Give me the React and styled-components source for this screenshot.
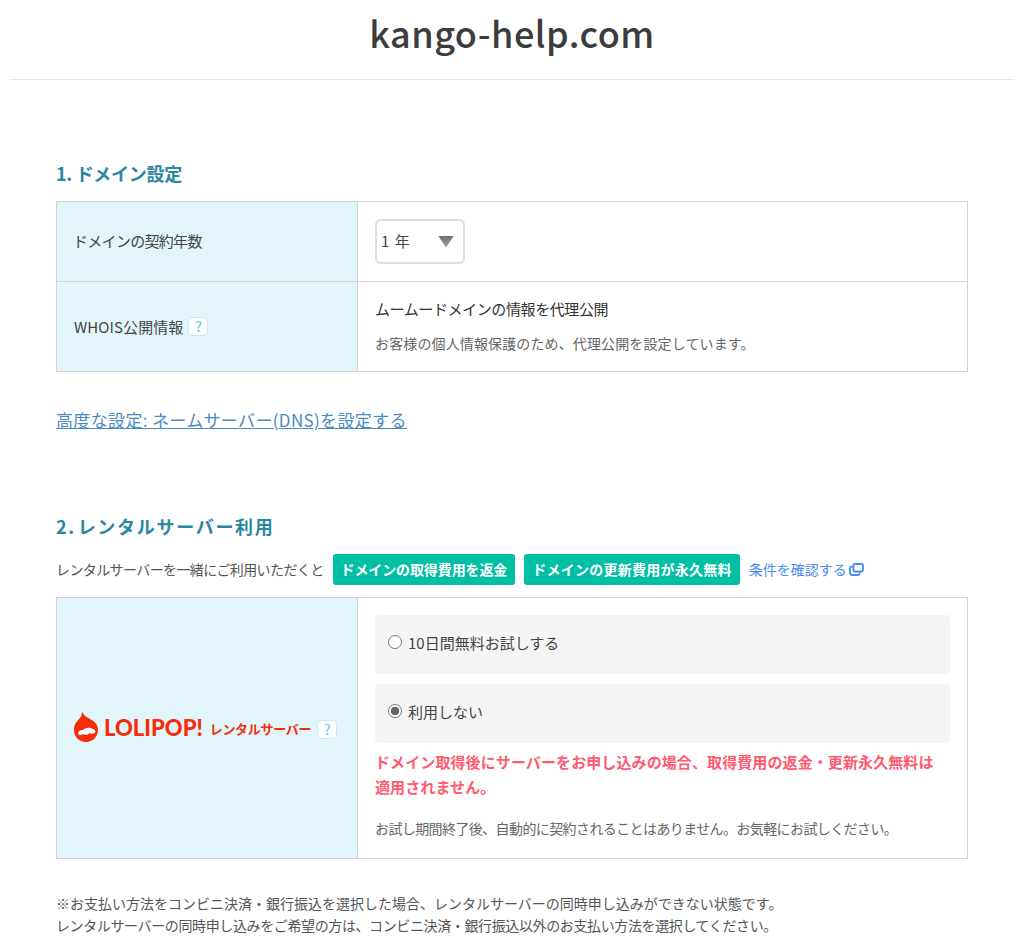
import React from 'react'
import styled, { createGlobalStyle } from 'styled-components'

const GlobalStyle = createGlobalStyle`
    html, body {
        margin: 0;
        padding: 0;
        background: #fff;
    }
    body {
        font-family: "Noto Sans CJK JP", "Liberation Sans", sans-serif;
        color: #444;
        font-size: 14px;
    }
`

function App() {
    return (
        <Page>
            <GlobalStyle />
            <Header>
                <Title>kango-help.com</Title>
            </Header>
            <Main>
                <Heading>1. ドメイン設定</Heading>
                <Table>
                    <Row>
                        <Label $tight>ドメインの契約年数</Label>
                        <Value $height={79}>
                            <Select>
                                <span>1 年</span>
                                <Arrow />
                            </Select>
                        </Value>
                    </Row>
                    <Row>
                        <Label $low>WHOIS公開情報<HelpBadge>?</HelpBadge></Label>
                        <Value $height={89}>
                            <Strong>ムームードメインの情報を代理公開</Strong>
                            <Note>お客様の個人情報保護のため、代理公開を設定しています。</Note>
                        </Value>
                    </Row>
                </Table>
                <DnsLink href="#">高度な設定: ネームサーバー(DNS)を設定する</DnsLink>

                <Heading $second>2. レンタルサーバー利用</Heading>
                <Lead>
                    <LeadText>レンタルサーバーを一緒にご利用いただくと</LeadText>
                    <Tag>ドメインの取得費用を返金</Tag>
                    <Tag $wide>ドメインの更新費用が永久無料</Tag>
                    <TermsLink href="#">
                        条件を確認する
                        <svg width="15" height="13" viewBox="0 0 15 13" fill="none" stroke="#4a8cf0" strokeWidth="1.8">
                            <rect x="4.500" y="1" width="9.500" height="7.500" rx="1.500" />
                            <path d="M4.500 3.600H2.500A1.500 1.500 0 0 0 1 5.100V10.500A1.500 1.500 0 0 0 2.500 12H9A1.500 1.500 0 0 0 10.500 10.500V8.500" />
                        </svg>
                    </TermsLink>
                </Lead>
                <Table>
                    <Row>
                        <LogoCell>
                            <svg width="24" height="30" viewBox="0 0 24 30">
                                <path fill="#f52c08" d="M8 0C10 3 12 5 16 7C21 9.500 24 13 24 18C24 25 18.500 30 12 30C5.500 30 0 25 0 18C0 12 3 9.500 5 7C7 5 8 3 8 0Z" />
                                <path fill="#fff" d="M4 21C4.500 18.500 7 17.500 9 18C11 15.500 16 15 19 17C21 17.500 22 19 21 20.500C19.500 22 17 22 15.500 21C14 23 11 23.500 9 22C7.500 23.500 4 23.500 4 21Z" />
                            </svg>
                            <LogoWord>LOLIPOP!</LogoWord>
                            <LogoSub>レンタルサーバー</LogoSub>
                            <HelpBadge $logo>?</HelpBadge>
                        </LogoCell>
                        <ServerValue>
                            <Option $first>
                                <Radio />
                                10日間無料お試しする
                            </Option>
                            <Option>
                                <Radio $checked />
                                利用しない
                            </Option>
                            <Warning>
                                ドメイン取得後にサーバーをお申し込みの場合、取得費用の返金・更新永久無料は<br />
                                適用されません。
                            </Warning>
                            <Note $bottom>お試し期間終了後、自動的に契約されることはありません。お気軽にお試しください。</Note>
                        </ServerValue>
                    </Row>
                </Table>
                <Footnotes>
                    <FootLine>※お支払い方法をコンビニ決済・銀行振込を選択した場合、レンタルサーバーの同時申し込みができない状態です。</FootLine>
                    <FootLine $tight>レンタルサーバーの同時申し込みをご希望の方は、コンビニ決済・銀行振込以外のお支払い方法を選択してください。</FootLine>
                </Footnotes>
            </Main>
        </Page>
    )
}

export default App

const Page = styled.div`
    width: 1024px;
    height: 936px;
    overflow: hidden;
    padding: 0 10px;
    box-sizing: border-box;
`

const Header = styled.header`
    height: 79px;
    border-bottom: 1px solid #e8e8e8;
    display: flex;
    justify-content: center;
    align-items: flex-start;
`

const Title = styled.h1`
    margin: 8px 0 0;
    font-size: 36px;
    line-height: 48px;
    font-weight: 500;
    color: #3c3c3c;
    letter-spacing: 0.5px;
`

const Main = styled.main`
    padding: 0 46px;
`

const Heading = styled.h2`
    margin: ${(p) => (p.$second ? '78px 0 0' : '79px 0 1px')};
    height: 41px;
    font-size: 18px;
    line-height: 28px;
    font-weight: 700;
    color: #2a87a2;
    letter-spacing: ${(p) => (p.$second ? '1.7px' : '-0.3px')};
    word-spacing: ${(p) => (p.$second ? '-4px' : '0')};
`

const Table = styled.div`
    border: 1px solid #d3d3d3;
    border-bottom-width: 0;
`

const Row = styled.div`
    display: grid;
    grid-template-columns: 301px 1fr;
    border-bottom: 1px solid #d3d3d3;
`

const Label = styled.div`
    background: #e1f5fa;
    border-right: 1px solid #c9d6da;
    display: flex;
    align-items: center;
    padding: 0 0 ${(p) => (p.$low ? '1px' : '3px')} ${(p) => (p.$low ? '17px' : '16px')};
    font-size: 15px;
    letter-spacing: ${(p) => (p.$tight ? '-0.7px' : '0.1px')};
    color: #444;
`

const Value = styled.div`
    height: ${(p) => p.$height}px;
    box-sizing: border-box;
    padding: 0 17px;
    display: flex;
    flex-direction: column;
    justify-content: center;
    align-items: flex-start;
`

const HelpBadge = styled.span`
    display: inline-flex;
    align-items: center;
    justify-content: center;
    width: 20px;
    height: 19px;
    box-sizing: border-box;
    margin: ${(p) => (p.$logo ? '4px 0 0 6px' : '0 0 0 5px')};
    background: #fff;
    border: 1px solid #cdeaf2;
    border-radius: 4px;
    color: #6cc3dc;
    font-size: 14px;
    line-height: 1;
    letter-spacing: 0;
`

const Select = styled.div`
    width: 90px;
    height: 45px;
    box-sizing: border-box;
    display: flex;
    align-items: center;
    justify-content: space-between;
    padding: 0 9px 2px 4px;
    background: #fff;
    border: 2px solid #dcdcdc;
    border-radius: 6px;
    font-size: 15px;
    color: #444;
    letter-spacing: 1px;
`

const Arrow = styled.span`
    width: 16px;
    height: 12px;
    margin-top: 2px;
    background: linear-gradient(#70706a, #a5a59c);
    clip-path: polygon(0 0, 100% 0, 50% 100%);
`

const Strong = styled.p`
    margin: -2px 0 10px;
    font-size: 15px;
    line-height: 24px;
    letter-spacing: -0.4px;
    color: #333;
`

const Note = styled.p`
    margin: ${(p) => (p.$bottom ? '17px 0 0' : '0')};
    font-size: 14px;
    line-height: 24px;
    letter-spacing: ${(p) => (p.$bottom ? '-0.6px' : '0.13px')};
    color: #666;
`

const DnsLink = styled.a`
    display: inline-block;
    margin-top: 34px;
    font-size: 17px;
    line-height: 28px;
    letter-spacing: 0.35px;
    color: #4a8ac4;
    text-decoration: underline;
`

const Lead = styled.div`
    display: flex;
    align-items: center;
    height: 32px;
    margin-bottom: 12px;
`

const LeadText = styled.span`
    font-size: 14px;
    letter-spacing: -0.6px;
    color: #555;
    margin-right: 9px;
`

const Tag = styled.span`
    display: inline-flex;
    align-items: center;
    height: 31px;
    padding: 0 8px;
    margin-right: 9px;
    background: #00bfa5;
    border-radius: 3px;
    color: #fff;
    font-size: 14px;
    font-weight: 700;
    letter-spacing: ${(p) => (p.$wide ? '0.25px' : '-0.12px')};
`

const TermsLink = styled.a`
    display: inline-flex;
    align-items: center;
    gap: 2px;
    font-size: 14px;
    color: #4a8cf0;
    text-decoration: none;
`

const LogoCell = styled(Label)`
    padding: 0 0 2px 17px;
    letter-spacing: 0;
`

const LogoWord = styled.span`
    margin-left: 6px;
    font-family: "Lato", "Liberation Sans", sans-serif;
    font-size: 22px;
    font-weight: 900;
    color: #f52c08;
`

const LogoSub = styled.span`
    margin: 2px 0 0 7px;
    font-size: 13px;
    font-weight: 700;
    letter-spacing: -0.3px;
    color: #f52c08;
`

const ServerValue = styled.div`
    height: 260px;
    box-sizing: border-box;
    padding: 17px 17px 0;
`

const Option = styled.div`
    height: 59px;
    margin-bottom: ${(p) => (p.$first ? '10px' : '0')};
    padding: 0 0 4px 13px;
    box-sizing: border-box;
    background: #f5f5f5;
    border-radius: 3px;
    display: flex;
    align-items: center;
    gap: 6px;
    font-size: 15px;
    color: #444;
`

const Radio = styled.span`
    width: 14px;
    height: 14px;
    margin-top: -2px;
    box-sizing: border-box;
    border-radius: 50%;
    border: 1px solid #777;
    background: ${(p) => (p.$checked ? 'radial-gradient(circle, #666 0 4px, #fff 4.5px)' : '#fff')};
`

const Warning = styled.p`
    margin: 6px 0 0;
    font-size: 15px;
    line-height: 25px;
    font-weight: 700;
    letter-spacing: 0.1px;
    white-space: nowrap;
    color: #ff5a70;
`

const Footnotes = styled.div`
    margin-top: 33px;
`

const FootLine = styled.p`
    margin: 0;
    font-size: 14px;
    line-height: 22px;
    letter-spacing: ${(p) => (p.$tight ? '-0.38px' : '0')};
    color: #555;
`
